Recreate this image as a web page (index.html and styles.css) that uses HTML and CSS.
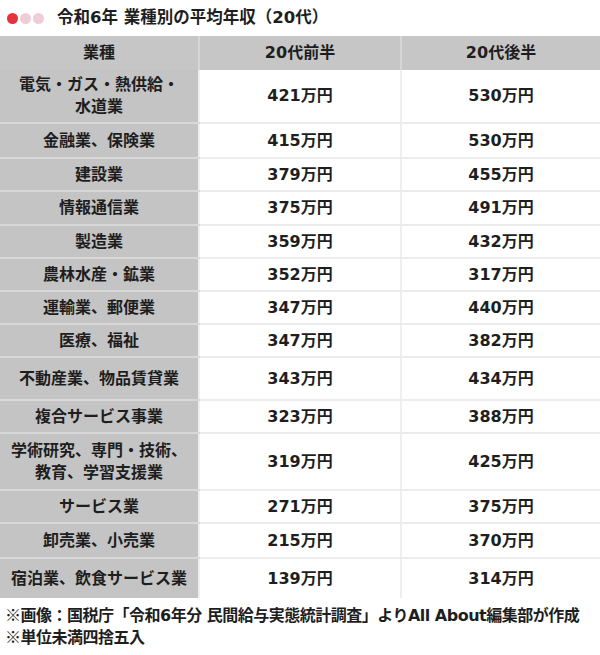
FILE: index.html
```html
<!DOCTYPE html>
<html lang="ja">
<head>
<meta charset="utf-8">
<link rel="stylesheet" href="styles.css">
</head>
<body>
<div class="title-bar">
  <span class="dot dot-red"></span>
  <span class="dot dot-pink"></span>
  <span class="dot dot-pink"></span>
  <h1 class="title">令和6年 業種別の平均年収（20代）</h1>
</div>
<table class="salary">
  <thead>
    <tr class="h-head"><th class="c1">業種</th><th class="c2">20代前半</th><th class="c3">20代後半</th></tr>
  </thead>
  <tbody>
    <tr class="h53"><th>電気・ガス・熱供給・<br>水道業</th><td>421万円</td><td>530万円</td></tr>
    <tr class="h35"><th>金融業、保険業</th><td>415万円</td><td>530万円</td></tr>
    <tr class="h33"><th>建設業</th><td>379万円</td><td>455万円</td></tr>
    <tr class="h34"><th>情報通信業</th><td>375万円</td><td>491万円</td></tr>
    <tr class="h33"><th>製造業</th><td>359万円</td><td>432万円</td></tr>
    <tr class="h33"><th>農林水産・鉱業</th><td>352万円</td><td>317万円</td></tr>
    <tr class="h33"><th>運輸業、郵便業</th><td>347万円</td><td>440万円</td></tr>
    <tr class="h33"><th>医療、福祉</th><td>347万円</td><td>382万円</td></tr>
    <tr class="h43"><th>不動産業、物品賃貸業</th><td>343万円</td><td>434万円</td></tr>
    <tr class="h33"><th>複合サービス事業</th><td>323万円</td><td>388万円</td></tr>
    <tr class="h57"><th>学術研究、専門・技術、<br>教育、学習支援業</th><td>319万円</td><td>425万円</td></tr>
    <tr class="h33"><th>サービス業</th><td>271万円</td><td>375万円</td></tr>
    <tr class="h35"><th>卸売業、小売業</th><td>215万円</td><td>370万円</td></tr>
    <tr class="h40 last"><th>宿泊業、飲食サービス業</th><td>139万円</td><td>314万円</td></tr>
  </tbody>
</table>
<div class="notes">
  <p><span class="mark">※</span>画像：国税庁「令和6年分 民間給与実態統計調査」よりAll About編集部が作成</p>
  <p><span class="mark">※</span>単位未満四捨五入</p>
</div>
</body>
</html>
```

FILE: styles.css
```css
html, body {
  margin: 0;
  padding: 0;
  background: #ffffff;
}
body {
  width: 600px;
  font-family: "DejaVu Sans", "Noto Sans CJK JP", sans-serif;
  color: #1e1e1e;
}
.title-bar {
  height: 36px;
  display: flex;
  align-items: center;
  padding-left: 7px;
  box-sizing: border-box;
}
.dot {
  width: 11px;
  height: 11px;
  border-radius: 50%;
  margin-right: 2px;
  flex: none;
}
.dot-red { background: #e5323c; }
.dot-pink { background: #efcdd6; }
.title {
  margin: 0 0 0 11px;
  font-size: 16.5px;
  font-weight: 700;
  line-height: 1;
  color: #1e1e1e;
}
.salary {
  width: 600px;
  border-collapse: collapse;
  table-layout: fixed;
}
.salary th, .salary td {
  padding: 0;
  text-align: center;
  vertical-align: middle;
  font-size: 16px;
  font-weight: 700;
  line-height: 22px;
  color: #1e1e1e;
}
.salary thead th {
  background: #c6c6c6;
  height: 34px;
  border-left: 2px solid #d6d6d6;
}
.salary thead th.c1 { width: 198px; border-left: none; }
.salary thead th.c2 { width: 200px; }
.salary tbody th {
  background: #c4c4c4;
  border-bottom: 2px solid #d8d8d8;
  white-space: nowrap;
}
.salary tbody td {
  background: #ffffff;
  border-bottom: 2px solid #ececec;
  border-left: 2px solid #efefef;
}
.salary tbody tr.last th,
.salary tbody tr.last td {
  border-bottom: none;
}
.h33 { height: 33px; }
.h34 { height: 34px; }
.h35 { height: 35px; }
.h40 { height: 40px; }
.h43 { height: 43px; }
.h53 { height: 53px; }
.h57 { height: 57px; }
.notes {
  padding: 6px 0 0 5px;
}
.notes p {
  margin: 0;
  font-size: 16px;
  font-weight: 700;
  line-height: 20px;
  color: #1e1e1e;
  letter-spacing: -0.5px;
  white-space: nowrap;
}
.mark {
  font-family: "Noto Sans CJK JP", sans-serif;
}
```
